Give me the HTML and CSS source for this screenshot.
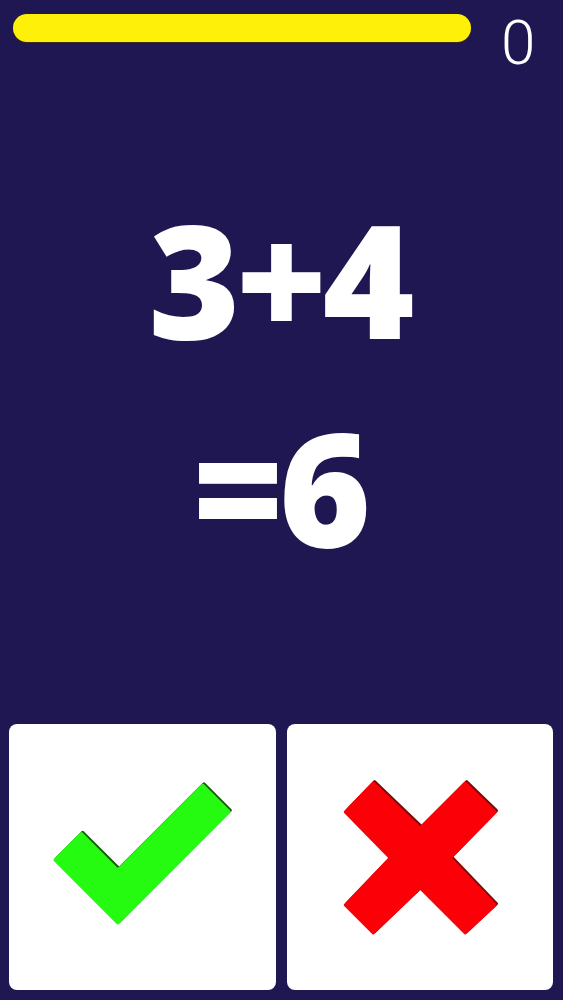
FILE: index.html
```html
<!DOCTYPE html>
<html lang="en">
<head>
<meta charset="utf-8">
<title>Math Quiz</title>
<link rel="stylesheet" href="styles.css">
</head>
<body>
<div class="app">
  <header class="top">
    <div class="timer"></div>
    <div class="score">0</div>
  </header>
  <main class="question">
    <div class="eq">3+4</div>
    <div class="eq">=6</div>
  </main>
  <div class="answers">
    <button class="card" aria-label="Correct">
      <svg class="icon" viewBox="0 0 267 266" xmlns="http://www.w3.org/2000/svg">
        <polygon points="46,136 72.5,109.5 109,146 194,61 220.5,87.5 109,199" fill="#145c06" stroke="#145c06" stroke-width="3" stroke-linejoin="round" transform="translate(1.3,-1.3)"/>
        <polygon points="46,136 72.5,109.5 109,146 194,61 220.5,87.5 109,199" fill="#24fb10" stroke="#24fb10" stroke-width="3" stroke-linejoin="round"/>
      </svg>
    </button>
    <button class="card" aria-label="Wrong">
      <svg class="icon" viewBox="0 0 266 266" xmlns="http://www.w3.org/2000/svg">
        <polygon points="86,59 58,88 103,134 58,181 86,209 133,164 178,209 208,181 163,134 208,88 178,59 133,104" fill="#7a0a0a" stroke="#7a0a0a" stroke-width="3" stroke-linejoin="round" transform="translate(1.3,-1.3)"/>
        <polygon points="86,59 58,88 103,134 58,181 86,209 133,164 178,209 208,181 163,134 208,88 178,59 133,104" fill="#fc0008" stroke="#fc0008" stroke-width="3" stroke-linejoin="round"/>
      </svg>
    </button>
  </div>
</div>
</body>
</html>
```

FILE: styles.css
```css
html, body {
  margin: 0;
  padding: 0;
  background: #1e1752;
}

.app {
  height: 1000px;
  display: flex;
  flex-direction: column;
  background: #1e1752;
  font-family: "Open Sans", "Liberation Sans", sans-serif;
}

.top {
  height: 70px;
  box-sizing: border-box;
  padding: 14px 0 0 13px;
  display: flex;
  align-items: flex-start;
}

.timer {
  width: 458px;
  height: 28px;
  border-radius: 14px;
  background: #fff00a;
  box-shadow: 0 1px 0 rgba(70, 50, 10, 0.8);
}

.score {
  margin-left: 30px;
  margin-top: -2px;
  font-family: Roboto, "Open Sans", sans-serif;
  font-weight: 300;
  font-size: 62px;
  line-height: 1;
  color: #ffffff;
}

.question {
  padding-top: 104px;
  display: flex;
  flex-direction: column;
  align-items: center;
}

.eq {
  font-family: "Open Sans", sans-serif;
  font-weight: 800;
  font-size: 157px;
  line-height: 208px;
  letter-spacing: -5px;
  text-indent: -5px;
  color: #ffffff;
}

.answers {
  margin-top: auto;
  padding: 0 10px 10px 9px;
  display: flex;
  gap: 11px;
}

.card {
  flex: 1;
  height: 266px;
  padding: 0;
  border: none;
  border-radius: 8px;
  background: #ffffff;
  display: block;
  cursor: pointer;
}

.icon {
  display: block;
  width: 100%;
  height: 100%;
}
```
